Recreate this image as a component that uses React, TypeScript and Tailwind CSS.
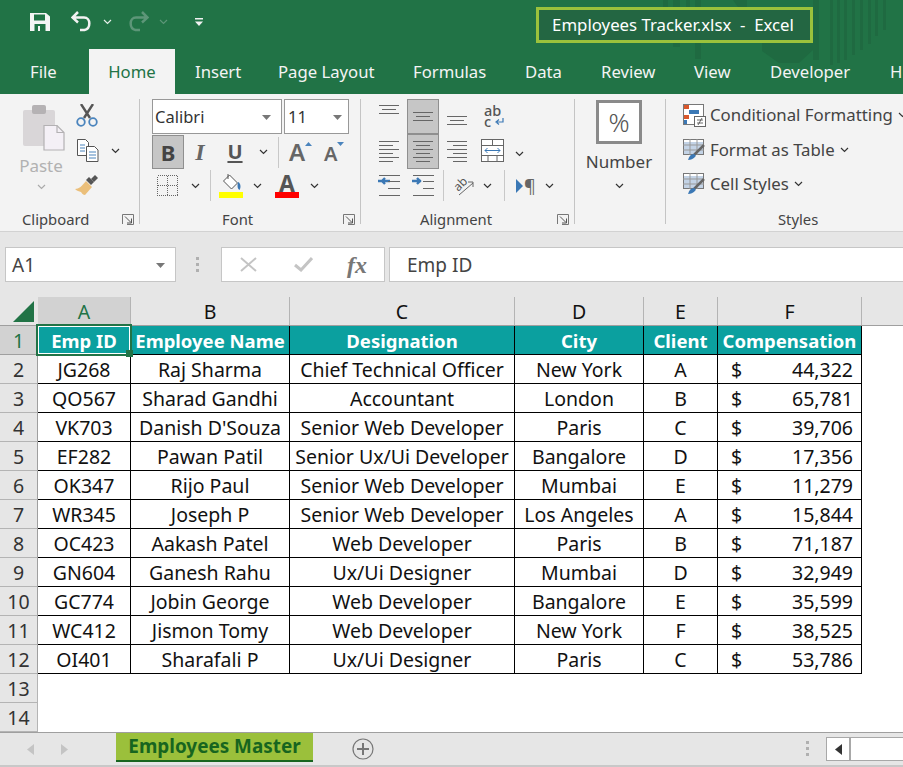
import type { ReactNode } from 'react';

const font = { fontFamily: '"Noto Sans", "Open Sans", sans-serif' };

const tabs = [
  { label: 'File', cls: 'ml-[30px] w-[59px]' },
  { label: 'Home', cls: 'w-[86px] justify-center bg-[#f3f3f3] text-[#217346]' },
  { label: 'Insert', cls: 'ml-[20px] w-[83px]' },
  { label: 'Page Layout', cls: 'w-[135px]' },
  { label: 'Formulas', cls: 'w-[112px]' },
  { label: 'Data', cls: 'w-[76px]' },
  { label: 'Review', cls: 'w-[93px]' },
  { label: 'View', cls: 'w-[76px]' },
  { label: 'Developer', cls: 'w-[120px]' },
  { label: 'H', cls: '' },
];

const rows = [
  ['JG268', 'Raj Sharma', 'Chief Technical Officer', 'New York', 'A', '44,322'],
  ['QO567', 'Sharad Gandhi', 'Accountant', 'London', 'B', '65,781'],
  ['VK703', "Danish D'Souza", 'Senior Web Developer', 'Paris', 'C', '39,706'],
  ['EF282', 'Pawan Patil', 'Senior Ux/Ui Developer', 'Bangalore', 'D', '17,356'],
  ['OK347', 'Rijo Paul', 'Senior Web Developer', 'Mumbai', 'E', '11,279'],
  ['WR345', 'Joseph P', 'Senior Web Developer', 'Los Angeles', 'A', '15,844'],
  ['OC423', 'Aakash Patel', 'Web Developer', 'Paris', 'B', '71,187'],
  ['GN604', 'Ganesh Rahu', 'Ux/Ui Designer', 'Mumbai', 'D', '32,949'],
  ['GC774', 'Jobin George', 'Web Developer', 'Bangalore', 'E', '35,599'],
  ['WC412', 'Jismon Tomy', 'Web Developer', 'New York', 'F', '38,525'],
  ['OI401', 'Sharafali P', 'Ux/Ui Designer', 'Paris', 'C', '53,786'],
];

const headers = ['Emp ID', 'Employee Name', 'Designation', 'City', 'Client', 'Compensation'];
const gridCols = 'grid grid-cols-[38px_93px_159px_225px_129px_74px_144px_41px]';

const Chevron = ({ color = '#333', className = '' }: { color?: string; className?: string }) => (
  <svg width="9" height="6" viewBox="0 0 9 6" className={`shrink-0 ${className}`}>
    <path d="M1 1l3.500 3.500L8 1" fill="none" stroke={color} strokeWidth="1.200" />
  </svg>
);

const Caret = () => (
  <svg width="9" height="5" viewBox="0 0 9 5">
    <path d="M0 0h9L4.500 5z" fill="#777" />
  </svg>
);

const Launcher = () => (
  <svg width="12" height="11" viewBox="0 0 12 11">
    <path d="M.5 10V.5h11v10H5" fill="none" stroke="#777" />
    <path d="M3 2.500l6 6M9.500 4.500v4.500H5" fill="none" stroke="#555" />
  </svg>
);

const Sep = ({ cls }: { cls: string }) => <div className={`w-px shrink-0 bg-[#c8c8c8] ${cls}`} />;

const Lines = ({ spans, h = 15 }: { spans: [number, number][]; h?: number }) => {
  const gap = spans.length > 1 ? (h - 1) / (spans.length - 1) : 0;
  return (
    <svg width="22" height={h} viewBox={`0 0 22 ${h}`}>
      {spans.map(([a, b], i) => (
        <rect key={i} x={a} y={Math.round(i * gap)} width={b - a} height="1" fill="#666" />
      ))}
    </svg>
  );
};

const Group = ({
  w,
  label,
  labelCls = '',
  launcher = false,
  children,
}: {
  w: string;
  label: string;
  labelCls?: string;
  launcher?: boolean;
  children: ReactNode;
}) => (
  <div className={`${w} flex h-full shrink-0 flex-col border-r border-[#c4c4c4]`}>
    <div className="h-[110px] shrink-0">{children}</div>
    <div className="flex h-[20px] shrink-0 items-center text-[14.8px] text-[#444]">
      <span className={labelCls}>{label}</span>
      {launcher && (
        <span className="ml-auto mr-[5px] flex">
          <Launcher />
        </span>
      )}
    </div>
  </div>
);

const IconCell = ({ w, cls = '', children }: { w: string; cls?: string; children: ReactNode }) => (
  <div className={`${w} flex shrink-0 justify-center ${cls}`}>{children}</div>
);

const Watermark = () => (
  <svg width="263" height="94" viewBox="640 0 263 94" className="pointer-events-none absolute left-[640px] top-0">
    <g fill="#1f6a41">
      <rect x="663" y="0" width="5" height="36" />
      <rect x="673" y="0" width="7" height="47" />
      <rect x="686" y="0" width="4" height="36" />
      <rect x="695" y="0" width="6" height="59" />
      <path d="M733 0h14v20zM762 40h51v10l-14 13h-20l-17-12z" />
      <rect x="813" y="0" width="6" height="60" />
      {[830, 837, 844, 852, 860, 868, 875, 883].map((x, i) => (
        <rect key={x} x={x} y="0" width="3" height={[65, 63, 60, 55, 50, 44, 36, 30][i]} />
      ))}
    </g>
  </svg>
);

const TitleBar = () => (
  <div className="relative flex h-[49px] items-center">
    {/* quick access toolbar */}
    <svg width="20" height="20" viewBox="0 0 20 20" className="mb-[5px] ml-[30px]">
      <path d="M0 1h16l4 3.500V19H0z" fill="#f5f5f5" />
      <rect x="4" y="2.500" width="11" height="6" fill="#217346" />
      <rect x="4.500" y="12" width="11" height="7" fill="#217346" />
      <rect x="8" y="14" width="2" height="5" fill="#f5f5f5" />
    </svg>
    <svg width="22" height="22" viewBox="0 0 22 22" className="mb-[5px] ml-[21px]">
      <path d="M7 1L1.500 6.500 7 11.500M2 6.500h11c7 0 7 11 .5 12.500H9" fill="none" stroke="#f2f2f2" strokeWidth="2.500" />
    </svg>
    <Chevron color="#e6efe9" className="mb-[5px] ml-[10px]" />
    <svg width="22" height="22" viewBox="0 0 22 22" className="mb-[5px] ml-[15px]">
      <path d="M15 1l5.500 5.500L15 11.500M20 6.500H9C2 6.500 2 17.500 8.500 19H13" fill="none" stroke="#5d9678" strokeWidth="2.500" />
    </svg>
    <Chevron color="#5d9678" className="mb-[5px] ml-[10px]" />
    <svg width="8" height="9" viewBox="0 0 8 9" className="mb-[5px] ml-[27px]">
      <rect width="8" height="1.500" fill="#f2f2f2" />
      <path d="M0 3.500h8L4 8z" fill="#f2f2f2" />
    </svg>
    <div className="ml-[333px] flex h-[36px] w-[277px] items-center justify-center whitespace-pre border-[3px] border-[#9bc23c] bg-[#236642] pr-[3px] text-[16.8px] text-white">
      Employees Tracker.xlsx  -  Excel
    </div>
  </div>
);

const TabRow = () => (
  <div className="relative flex h-[45px] items-stretch text-[16.7px] text-[#f4f4f4]">
    {tabs.map((t) => (
      <div key={t.label} className={`flex shrink-0 items-center whitespace-nowrap ${t.cls}`}>
        {t.label}
      </div>
    ))}
  </div>
);

const Clipboard = () => (
  <Group w="w-[140px]" label="Clipboard" labelCls="ml-[22px]" launcher>
    <div className="flex pt-[6px]">
      <div className="ml-[16px] flex w-[50px] flex-col items-center">
        <svg width="42" height="46" viewBox="0 0 42 46" className="ml-[6px]">
          <rect x="0" y="5" width="32" height="36" rx="2" fill="#d9d6d8" />
          <rect x="9" y="0" width="14" height="9" rx="2" fill="#b5b2b4" />
          <path d="M21 20.500h13l7 7v17.500H21z" fill="#f4f0f6" stroke="#b3b1b3" strokeWidth="1.200" />
          <path d="M34 20.500v7h7" fill="none" stroke="#b3b1b3" strokeWidth="1.200" />
        </svg>
        <div className="mt-[3px] text-[17px] leading-[24px] text-[#b1b1b1]">Paste</div>
        <Chevron color="#aaa" className="mt-[6px]" />
      </div>
      <div className="-mt-[1px] ml-[10px] flex flex-col gap-[12px]">
        <svg width="22" height="23" viewBox="0 0 22 23">
          <path d="M5 0l9 14M17 0L8 14" stroke="#555" strokeWidth="2.400" />
          <circle cx="5" cy="18" r="3.800" fill="none" stroke="#4a84bd" strokeWidth="1.800" />
          <circle cx="17" cy="18" r="3.800" fill="none" stroke="#4a84bd" strokeWidth="1.800" />
        </svg>
        <div className="flex items-center">
          <svg width="22" height="23" viewBox="0 0 22 23" className="ml-[1px]">
            <path d="M.5.500h8l3 3v13h-11z" fill="#fff" stroke="#555" />
            <path d="M9.500 7.500h8l3.500 3.500v11.500h-11.500z" fill="#fff" stroke="#555" />
            <path d="M3 6h5M3 9h5M3 12h5M12 13h7M12 16h7M12 19h7" stroke="#4a84bd" />
          </svg>
          <Chevron className="ml-[12px]" />
        </div>
        <svg width="24" height="21" viewBox="0 0 24 21" className="-ml-[1px] mt-[1px]">
          <path d="M14 2l5 5-3 3-5-5z" fill="#555" />
          <path d="M20 0l3 3-4 4-3-3z" fill="#555" />
          <path d="M11 6l6 6-7 8c-3-.5-3-2-4-3-2-.500-4-1-6-3 4 0 7-3 11-8z" fill="#ebbf7a" />
        </svg>
      </div>
    </div>
  </Group>
);

const FontGroup = () => (
  <Group w="w-[221px]" label="Font" labelCls="ml-[82px]" launcher>
    <div className="flex flex-col pl-[12px]">
      <div className="flex h-[35px] gap-[2px]">
        <div className="flex w-[130px] items-center justify-between border border-[#989898] bg-white pl-[2px] pr-[10px] pt-[1px] text-[16.5px] text-[#333]">
          Calibri <Caret />
        </div>
        <div className="flex w-[65px] items-center justify-between border border-[#989898] bg-white pl-[3px] pr-[6px] pt-[1px] text-[16.5px] text-[#333]">
          11 <Caret />
        </div>
      </div>
      <div className="mt-[1px] flex h-[34px] items-center">
        <div className="flex h-[34px] w-[32px] shrink-0 items-center justify-center border border-[#8f8f8f] bg-[#c6c6c6] text-[22px] font-bold text-[#444]">
          B
        </div>
        <div className="w-[32px] shrink-0 text-center text-[24px] font-bold italic text-[#666] [font-family:Liberation_Serif,serif]">I</div>
        <div className="w-[38px] shrink-0 text-center text-[20px] font-bold leading-[22px] text-[#555] underline decoration-2 underline-offset-2">U</div>
        <Chevron className="ml-[5px]" />
        <Sep cls="ml-[10px] h-[31px]" />
        <div className="ml-[10px] flex w-[32px] shrink-0 items-start text-[24px] font-semibold leading-[26px] text-[#666]">
          A
          <svg width="7" height="4" viewBox="0 0 7 4" className="mt-[3px]">
            <path d="M0 4h7L3.500 0z" fill="#4a84bd" />
          </svg>
        </div>
        <div className="ml-[3px] flex w-[32px] shrink-0 items-start pt-[3px] text-[20px] font-semibold leading-[22px] text-[#666]">
          A
          <svg width="7" height="4" viewBox="0 0 7 4" className="-mt-[1px]">
            <path d="M0 0h7L3.500 4z" fill="#4a84bd" />
          </svg>
        </div>
      </div>
      <div className="mt-[1px] flex h-[31px] items-center">
        <svg width="21" height="21" viewBox="0 0 21 21" className="ml-[5px]" shapeRendering="crispEdges">
          <path d="M.5.500h20v20H.5zM10.500.500v20M.5 10.500h20" fill="none" stroke="#666" strokeDasharray="1 1" />
        </svg>
        <Chevron className="ml-[13px]" />
        <Sep cls="ml-[10px] h-[31px]" />
        <div className="ml-[8px] flex w-[24px] shrink-0 flex-col items-center">
          <svg width="21" height="18" viewBox="0 0 21 18">
            <path d="M8.500 1l8 8-6 6-8-8z" fill="#fff" stroke="#555" />
            <path d="M7 0v5" stroke="#555" />
            <path d="M17 8c3 1 3 6 1.500 8-2-1-2.500-4-1.500-8z" fill="#3b78b5" />
          </svg>
          <div className="h-[6px] w-[24px] bg-[#ffff00]" />
        </div>
        <Chevron className="ml-[10px]" />
        <div className="ml-[13px] flex w-[24px] shrink-0 flex-col items-center">
          <div className="h-[18px] text-[23px] font-bold leading-[18px] text-[#555]">A</div>
          <div className="h-[6px] w-[24px] bg-[#ff0000]" />
        </div>
        <Chevron className="ml-[11px]" />
      </div>
    </div>
  </Group>
);

const Alignment = () => {
  const stack: [number, number][] = [[1, 21], [4, 18], [1, 21]];
  return (
    <Group w="w-[214px]" label="Alignment" labelCls="ml-[59px]" launcher>
      <div className="flex flex-col pl-[17px]">
        <div className="flex h-[35px]">
          <IconCell w="w-[22px]" cls="items-start pt-[6px]">
            <Lines spans={stack} h={9} />
          </IconCell>
          <IconCell w="w-[32px]" cls="ml-[7px] items-center border border-[#8f8f8f] bg-[#c6c6c6]">
            <Lines spans={stack} h={9} />
          </IconCell>
          <IconCell w="w-[22px]" cls="ml-[7px] items-end pb-[9px]">
            <Lines spans={stack} h={9} />
          </IconCell>
          <div className="ml-[16px] flex w-[22px] items-end pb-[7px]">
            <span className="text-[14.5px] font-medium leading-[11px] text-[#555]">
              ab
              <br />c
            </span>
            <svg width="9" height="8" viewBox="0 0 9 8" className="-ml-[6px] mb-[1px]">
              <path d="M8 0v4H2M4 1.500L1 4l3 2.500" fill="none" stroke="#3b78b5" strokeWidth="1.200" />
            </svg>
          </div>
        </div>
        <div className="flex h-[35px]">
          <IconCell w="w-[22px]" cls="items-center">
            <Lines spans={[[1, 21], [1, 15], [1, 21], [1, 15], [1, 21], [1, 15]]} h={21} />
          </IconCell>
          <IconCell w="w-[32px]" cls="ml-[7px] items-center border border-[#8f8f8f] bg-[#c6c6c6]">
            <Lines spans={[[1, 21], [4, 18], [1, 21], [4, 18], [1, 21], [4, 18]]} h={21} />
          </IconCell>
          <IconCell w="w-[22px]" cls="ml-[7px] items-center">
            <Lines spans={[[1, 21], [7, 21], [1, 21], [7, 21], [1, 21], [7, 21]]} h={21} />
          </IconCell>
          <svg width="23" height="23" viewBox="0 0 23 23" className="ml-[13px] mt-[5px]">
            <rect x=".5" y=".5" width="22" height="22" fill="#fff" stroke="#666" />
            <path d="M0 6.500h23M0 16.500h23M11.500 0v6M7 17v6M16 17v6" stroke="#666" />
            <path d="M4 11.500h15M6.500 9L4 11.500 6.500 14M16.500 9l2.500 2.500-2.500 2.500" fill="none" stroke="#3b78b5" />
          </svg>
          <Chevron className="ml-[11px] mt-[17px]" />
        </div>
        <div className="mt-[1px] flex h-[31px] items-center">
          <svg width="22" height="21" viewBox="0 0 22 21">
            <path d="M0 6h12M7 3L4 6l3 3" fill="none" stroke="#3b78b5" strokeWidth="2.400" />
            <path d="M1 .500h21M10 6.500h12M10 13.500h12M1 20.500h21" stroke="#666" />
          </svg>
          <svg width="22" height="21" viewBox="0 0 22 21" className="ml-[12px]">
            <path d="M0 6h9M5 3l3 3-3 3" fill="none" stroke="#3b78b5" strokeWidth="2.400" />
            <path d="M1 .500h21M11 6.500h11M11 13.500h11M1 20.500h21" stroke="#666" />
          </svg>
          <Sep cls="ml-[9px] h-[31px]" />
          <svg width="21" height="22" viewBox="0 0 21 22" className="ml-[10px] overflow-visible">
            <text x="0" y="13" fontSize="12" fill="#555" transform="rotate(-45 7 10)">ab</text>
            <path d="M5 20L19 8M14 7h5v5" fill="none" stroke="#666" />
          </svg>
          <Chevron className="ml-[8px]" />
          <Sep cls="ml-[12px] h-[31px]" />
          <svg width="8" height="14" viewBox="0 0 8 14" className="ml-[11px] shrink-0">
            <path d="M0 0l7 7-7 7z" fill="#3b78b5" />
          </svg>
          <span className="text-[18px] leading-[18px] text-[#666]">¶</span>
          <Chevron className="ml-[9px]" />
        </div>
      </div>
    </Group>
  );
};

const NumberGroup = () => (
  <Group w="w-[91px]" label="">
    <div className="flex flex-col items-center pr-[2px] pt-[1px]">
      <div className="flex h-[44px] w-[46px] items-center justify-center border-[3px] border-[#8a8a8a] bg-white text-[26px] font-light text-[#555]">
        %
      </div>
      <div className="mt-[6px] text-[17px] leading-[24px] text-[#444]">Number</div>
      <Chevron className="mt-[9px]" />
    </div>
  </Group>
);

const GridIcon = ({ fill }: { fill: string }) => (
  <svg width="23" height="22" viewBox="0 0 23 22" className="shrink-0">
    <rect x=".5" y=".5" width="20" height="15" fill="#fff" stroke="#777" />
    <rect x="1" y="3" width="19" height="12" fill={fill} />
    <path d="M7 0v16M14 0v16M0 6h21M0 11h21" stroke="#999" />
    <path d="M21 6L11 16" stroke="#666" strokeWidth="2.500" />
    <path d="M5 21c1-4 3-6 6-6 2 1 2 2 1 3-2 2-4 3-7 3z" fill="#3b78b5" />
  </svg>
);

const Styles = () => (
  <div className="flex h-full flex-1 flex-col whitespace-nowrap">
    <div className="h-[110px] shrink-0 pl-[17px] pt-[4px] text-[16.8px] leading-[24px] text-[#444]">
      <div className="flex h-[24px] items-center gap-[4px]">
        <svg width="23" height="23" viewBox="0 0 23 23" className="shrink-0">
          <rect x=".5" y=".5" width="20" height="20" fill="#fff" stroke="#777" />
          <rect x="1" y="1" width="5" height="4" fill="#d9572b" />
          <rect x="6" y="6" width="10" height="4" fill="#3b78b5" />
          <rect x="1" y="11" width="5" height="4" fill="#d9572b" />
          <rect x="1" y="16" width="3" height="4" fill="#3b78b5" />
          <rect x="11.500" y="12.500" width="11" height="10" fill="#fff" stroke="#666" />
          <path d="M14 16h6M14 19h6M15 21l4-7" stroke="#444" strokeWidth=".8" />
        </svg>
        Conditional Formatting
        <Chevron className="ml-[1px]" />
      </div>
      <div className="mt-[11px] flex h-[24px] items-center gap-[4px]">
        <GridIcon fill="#c3d3e6" />
        Format as Table
        <Chevron className="ml-[1px]" />
      </div>
      <div className="mt-[10px] flex h-[24px] items-center gap-[4px]">
        <GridIcon fill="#c3d3e6" />
        Cell Styles
        <Chevron className="ml-[1px]" />
      </div>
    </div>
    <div className="flex h-[20px] shrink-0 items-center pl-[112px] text-[14.8px] text-[#444]">Styles</div>
  </div>
);

const Ribbon = () => (
  <div className="flex h-[138px] items-stretch border-b border-[#d2d2d2] bg-[#f3f3f3] pb-[7px] pt-[5px]">
    <Clipboard />
    <FontGroup />
    <Alignment />
    <NumberGroup />
    <Styles />
  </div>
);

const FormulaBar = () => (
  <div className="flex h-[65px] items-start bg-[#e6e6e6] pt-[15px] text-[19px] text-[#444]">
    <div className="ml-[5px] flex h-[35px] w-[171px] items-center justify-between border border-[#c6c6c6] bg-white pl-[6px] pr-[10px] pt-[1px]">
      A1 <Caret />
    </div>
    <div className="ml-[20px] flex h-[35px] flex-col items-center justify-center gap-[3px]">
      <span className="h-[3px] w-[3px] bg-[#b0b0b0]" />
      <span className="h-[3px] w-[3px] bg-[#b0b0b0]" />
      <span className="h-[3px] w-[3px] bg-[#b0b0b0]" />
    </div>
    <div className="ml-[22px] flex h-[35px] w-[164px] items-center border border-[#c6c6c6] bg-white">
      <svg width="17" height="15" viewBox="0 0 17 15" className="ml-[18px]">
        <path d="M1 1l15 13M16 1L1 14" stroke="#c4c4c4" strokeWidth="2" />
      </svg>
      <svg width="19" height="15" viewBox="0 0 19 15" className="ml-[37px]">
        <path d="M1 8l6 5L18 1" fill="none" stroke="#c4c4c4" strokeWidth="3" />
      </svg>
      <span className="ml-[34px] text-[24px] font-bold italic leading-[24px] text-[#777] [font-family:Liberation_Serif,serif]">fx</span>
    </div>
    <div className="ml-[4px] flex h-[35px] flex-1 items-center border-y border-l border-[#c6c6c6] bg-white pl-[17px] pt-[1px]">Emp ID</div>
  </div>
);

const Sheet = () => (
  <div className="relative text-[19.5px] leading-[24px] text-[#111]">
    {/* column letters */}
    <div className={`${gridCols} h-[29px] border-b border-[#9f9f9f] bg-[#e6e6e6]`}>
      <div className="flex items-end justify-end pb-[3px] pr-[4px]">
        <svg width="21" height="21" viewBox="0 0 21 21">
          <path d="M21 0v21H0z" fill="#217346" />
        </svg>
      </div>
      {['A', 'B', 'C', 'D', 'E', 'F'].map((c, i) => (
        <div
          key={c}
          className={`flex items-center justify-center border-r border-[#b4b4b4] pt-[2px] ${
            i === 0 ? 'bg-[#d2d2d2] text-[#217346]' : ''
          }`}
        >
          {c}
        </div>
      ))}
      <div />
    </div>
    {/* header row */}
    <div className={`${gridCols} h-[29px]`}>
      <div className="flex items-center justify-center border-b border-r border-[#9f9f9f] bg-[#d2d2d2] pt-[1px] text-[#217346]">1</div>
      {headers.map((h) => (
        <div
          key={h}
          className="flex items-center justify-center whitespace-nowrap border-b border-r border-black bg-[#0ba09f] pt-[1px] text-[18.5px] font-bold text-white"
        >
          {h}
        </div>
      ))}
      <div />
    </div>
    {rows.map((r, i) => (
      <div key={r[0]} className={`${gridCols} h-[29px]`}>
        <div className="flex items-center justify-center border-b border-r border-[#b4b4b4] border-r-[#9f9f9f] bg-[#e6e6e6] pt-[1px] text-[#333]">
          {i + 2}
        </div>
        {r.slice(0, 5).map((v, j) => (
          <div key={j} className="flex items-center justify-center whitespace-nowrap border-b border-r border-black pt-[1px]">
            {v}
          </div>
        ))}
        <div className="flex items-center justify-between border-b border-r border-black pl-[13px] pr-[8px] pt-[1px]">
          <span>$</span>
          <span>{r[5]}</span>
        </div>
        <div />
      </div>
    ))}
    {[13, 14].map((n) => (
      <div key={n} className={`${gridCols} h-[29px]`}>
        <div className="flex items-center justify-center border-b border-r border-[#b4b4b4] bg-[#e6e6e6] pt-[1px] text-[#333]">{n}</div>
      </div>
    ))}
    {/* selected cell */}
    <div className="absolute left-[36px] top-[27px] h-[32px] w-[96px] border-2 border-[#217346]">
      <div className="h-full w-full border border-white" />
      <div className="absolute -bottom-[3px] -right-[3px] h-[7px] w-[7px] bg-[#217346]" />
    </div>
  </div>
);

const SheetTabs = () => (
  <div className="flex h-[35px] items-start overflow-hidden border-b-2 border-t border-b-[#c8c8c8] border-t-[#9f9f9f] bg-[#e6e6e6]">
    <svg width="7" height="11" viewBox="0 0 7 11" className="ml-[27px] mt-[11px]">
      <path d="M7 0v11L0 5.500z" fill="#c4c4c4" />
    </svg>
    <svg width="7" height="11" viewBox="0 0 7 11" className="ml-[27px] mt-[11px]">
      <path d="M0 0v11l7-5.500z" fill="#c4c4c4" />
    </svg>
    <div className="ml-[48px] flex h-[29px] w-[197px] shrink-0 items-center justify-center border-b-2 border-[#17651f] bg-[#9bc03b] text-[18.9px] font-bold text-[#17651f]">
      Employees Master
    </div>
    <svg width="22" height="22" viewBox="0 0 22 22" className="ml-[39px] mt-[5px]">
      <circle cx="11" cy="11" r="10" fill="none" stroke="#777" strokeWidth="1.200" />
      <path d="M11 5v12M5 11h12" stroke="#777" strokeWidth="2" />
    </svg>
    <div className="ml-[432px] mt-[8px] flex flex-col gap-[3px]">
      <span className="h-[3px] w-[3px] bg-[#b0b0b0]" />
      <span className="h-[3px] w-[3px] bg-[#b0b0b0]" />
      <span className="h-[3px] w-[3px] bg-[#b0b0b0]" />
    </div>
    <div className="ml-[17px] mt-[4px] flex h-[24px] flex-1 border border-r-0 border-[#a8a8a8] bg-white">
      <div className="flex w-[24px] items-center justify-center border-r-2 border-[#a8a8a8]">
        <svg width="7" height="11" viewBox="0 0 7 11">
          <path d="M7 0v11L0 5.500z" fill="#333" />
        </svg>
      </div>
    </div>
  </div>
);

const App = () => {
  return (
    <div className="h-[767px] w-[903px] overflow-hidden bg-white" style={font}>
      <div className="relative overflow-hidden bg-[#217346]">
        <Watermark />
        <TitleBar />
        <TabRow />
      </div>
      <Ribbon />
      <FormulaBar />
      <Sheet />
      <SheetTabs />
    </div>
  );
};

export default App;
